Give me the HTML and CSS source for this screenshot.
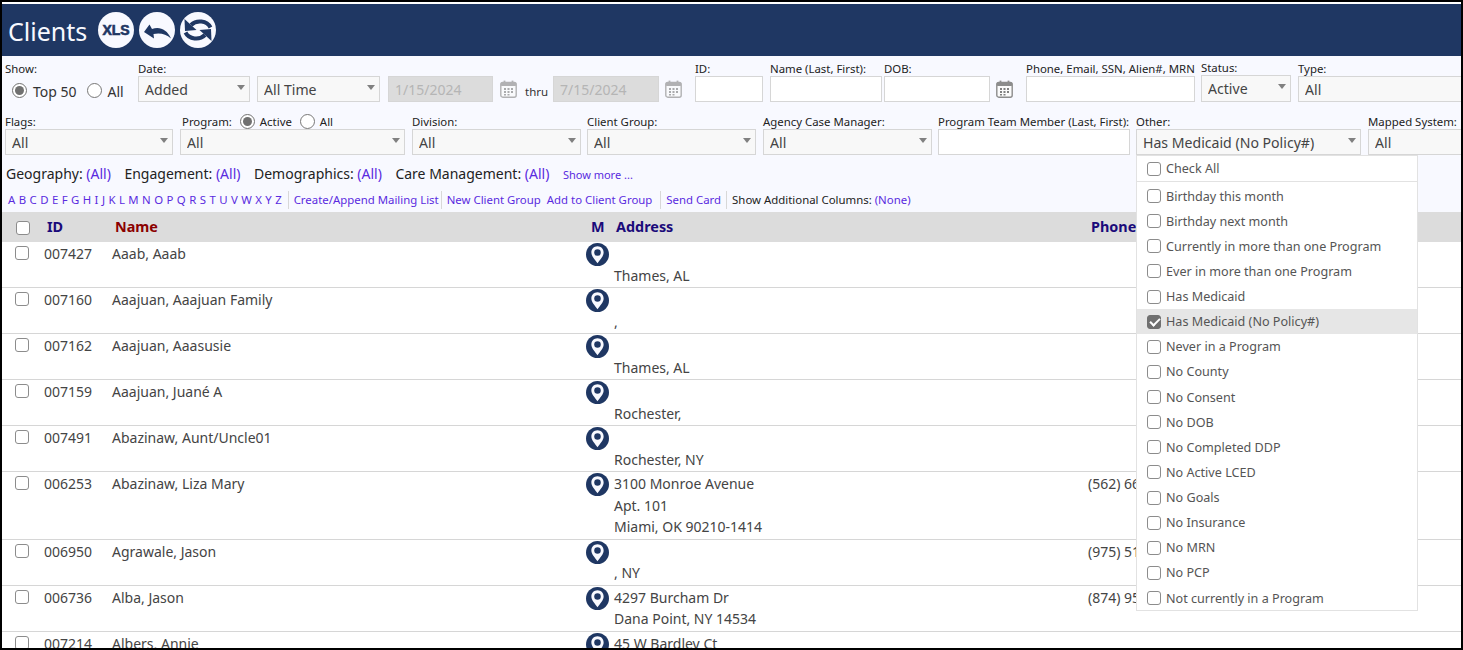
FILE: index.html
```html
<!DOCTYPE html>
<html lang="en">
<head>
    <meta charset="UTF-8">
    <title>Clients</title>
    <link rel="stylesheet" href="styles.css">
</head>
<body>
<svg class="defs" width="0" height="0">
    <symbol id="pin" viewBox="0 0 24 24">
        <circle cx="12" cy="12" r="12" fill="#1f3763"/>
        <path d="M12 3.500C8.200 3.500 5.600 6.400 5.600 9.900c0 3.900 3.900 7.700 6.400 11.100 2.500-3.400 6.400-7.200 6.400-11.100 0-3.500-2.600-6.400-6.400-6.400z" fill="#f8f9ff"/>
        <circle cx="12" cy="10" r="3.400" fill="#1f3763"/>
    </symbol>
    <symbol id="cal" viewBox="0 0 17 18">
        <rect x="0.800" y="2.500" width="15.400" height="14.700" rx="2" fill="#fbfbfb" stroke="#8c8c8c" stroke-width="1.400"/>
        <rect x="0.800" y="2.500" width="15.400" height="3.500" rx="1" fill="#8c8c8c"/>
        <rect x="3.600" y="0.600" width="1.800" height="3.400" fill="#8c8c8c"/>
        <rect x="11.600" y="0.600" width="1.800" height="3.400" fill="#8c8c8c"/>
        <path d="M4 8h2v2H4zM7.500 8h2v2h-2zM11 8h2v2h-2zM4 11h2v2H4zM7.500 11h2v2h-2zM11 11h2v2h-2zM7.500 14h2v1.600h-2zM4 14h2v1.600H4z" fill="#808080"/>
    </symbol>
</svg>

<div class="page">
    <div class="header">
        <h1>Clients</h1>
        <span class="round-btn xls">XLS</span>
        <span class="round-btn">
            <svg viewBox="0 0 36 36" width="36" height="36"><path d="M5 20 10.500 12.500 13 17C20 14 28 17 32 26.500 27 22 21 20.500 14.500 22L15 26.500z" fill="#1f3763"/></svg>
        </span>
        <span class="round-btn">
            <svg viewBox="0 0 36 36" width="36" height="36">
                <path d="M30.500 15.500C27 8.500 16.500 7.500 11 13" fill="none" stroke="#1f3763" stroke-width="4"/>
                <path d="M4.500 7 5 19 16.500 18z" fill="#1f3763"/>
                <path d="M5.500 20.500C9 27.500 19.500 28.500 25 23" fill="none" stroke="#1f3763" stroke-width="4"/>
                <path d="M31.500 29 31 17 19.500 18z" fill="#1f3763"/>
            </svg>
        </span>
    </div>

    <div class="filters">
        <div class="filter-row row-one">
            <div class="field f-show">
                <label>Show:</label>
                <div class="radios">
                    <input type="radio" name="show" checked><span class="radio-text">Top 50</span>
                    <input type="radio" name="show"><span class="radio-text">All</span>
                </div>
            </div>
            <div class="field f-added"><label>Date:</label><div class="select"><select><option>Added</option></select></div></div>
            <div class="field f-time"><div class="select"><select><option>All Time</option></select></div></div>
            <div class="field f-date"><input class="text-input" type="text" value="1/15/2024" disabled></div>
            <svg class="cal-icon f-cal1"><use href="#cal"/></svg>
            <span class="thru">thru</span>
            <div class="field f-date2"><input class="text-input" type="text" value="7/15/2024" disabled></div>
            <svg class="cal-icon f-cal2"><use href="#cal"/></svg>
            <div class="field f-id"><label>ID:</label><input class="text-input" type="text"></div>
            <div class="field f-name"><label>Name (Last, First):</label><input class="text-input" type="text"></div>
            <div class="field f-dob"><label>DOB:</label><input class="text-input" type="text"></div>
            <svg class="cal-icon f-cal3"><use href="#cal"/></svg>
            <div class="field f-phone"><label>Phone, Email, SSN, Alien#, MRN</label><input class="text-input" type="text"></div>
            <div class="field f-status"><label>Status:</label><div class="select tall"><select><option>Active</option></select></div></div>
            <div class="field f-type"><label>Type:</label><div class="select"><select><option>All</option></select></div></div>
        </div>

        <div class="filter-row row-two">
            <div class="field f-flags"><label>Flags:</label><div class="select"><select><option>All</option></select></div></div>
            <div class="field f-program">
                <div class="program-label">
                    <label>Program:</label>
                    <input type="radio" name="prog" checked><span>Active</span>
                    <input type="radio" name="prog"><span>All</span>
                </div>
                <div class="select"><select><option>All</option></select></div>
            </div>
            <div class="field f-division"><label>Division:</label><div class="select"><select><option>All</option></select></div></div>
            <div class="field f-group"><label>Client Group:</label><div class="select"><select><option>All</option></select></div></div>
            <div class="field f-acm"><label>Agency Case Manager:</label><div class="select"><select><option>All</option></select></div></div>
            <div class="field f-team"><label>Program Team Member (Last, First):</label><input class="text-input" type="text"></div>
            <div class="field f-other"><label>Other:</label><div class="select"><select><option>Has Medicaid (No Policy#)</option></select></div></div>
            <div class="field f-mapped"><label>Mapped System:</label><div class="select"><select><option>All</option></select></div></div>
        </div>

        <div class="summary">
            <span>Geography: <a>(All)</a></span>
            <span>Engagement: <a>(All)</a></span>
            <span>Demographics: <a>(All)</a></span>
            <span>Care Management: <a>(All)</a></span>
            <a class="show-more">Show more ...</a>
        </div>

        <div class="links">
            <span class="letters"><a>A</a> <a>B</a> <a>C</a> <a>D</a> <a>E</a> <a>F</a> <a>G</a> <a>H</a> <a>I</a> <a>J</a> <a>K</a> <a>L</a> <a>M</a> <a>N</a> <a>O</a> <a>P</a> <a>Q</a> <a>R</a> <a>S</a> <a>T</a> <a>U</a> <a>V</a> <a>W</a> <a>X</a> <a>Y</a> <a>Z</a></span>
            <span class="sep mailing"><a>Create/Append Mailing List</a></span>
            <span class="sep group-links"><a>New Client Group</a><a class="next">Add to Client Group</a></span>
            <span class="sep"><a>Send Card</a></span>
            <span class="sep dark">Show Additional Columns: <a>(None)</a></span>
        </div>
    </div>

    <table class="clients">
        <colgroup>
            <col class="c-check"><col class="c-id"><col class="c-name"><col class="c-map"><col class="c-addr"><col>
        </colgroup>
        <thead>
            <tr>
                <th><input class="cb" type="checkbox"></th>
                <th>ID</th>
                <th class="sorted">Name</th>
                <th>M</th>
                <th>Address</th>
                <th>Phone</th>
            </tr>
        </thead>
        <tbody>
            <tr>
                <td><input class="cb" type="checkbox"></td><td>007427</td><td>Aaab, Aaab</td>
                <td><svg class="pin"><use href="#pin"/></svg></td><td><br>Thames, AL</td><td></td>
            </tr>
            <tr>
                <td><input class="cb" type="checkbox"></td><td>007160</td><td>Aaajuan, Aaajuan Family</td>
                <td><svg class="pin"><use href="#pin"/></svg></td><td><br>,</td><td></td>
            </tr>
            <tr>
                <td><input class="cb" type="checkbox"></td><td>007162</td><td>Aaajuan, Aaasusie</td>
                <td><svg class="pin"><use href="#pin"/></svg></td><td><br>Thames, AL</td><td></td>
            </tr>
            <tr>
                <td><input class="cb" type="checkbox"></td><td>007159</td><td>Aaajuan, Juané A</td>
                <td><svg class="pin"><use href="#pin"/></svg></td><td><br>Rochester,</td><td></td>
            </tr>
            <tr>
                <td><input class="cb" type="checkbox"></td><td>007491</td><td>Abazinaw, Aunt/Uncle01</td>
                <td><svg class="pin"><use href="#pin"/></svg></td><td><br>Rochester, NY</td><td></td>
            </tr>
            <tr>
                <td><input class="cb" type="checkbox"></td><td>006253</td><td>Abazinaw, Liza Mary</td>
                <td><svg class="pin"><use href="#pin"/></svg></td><td>3100 Monroe Avenue<br>Apt. 101<br>Miami, OK 90210-1414</td><td>(562) 66</td>
            </tr>
            <tr>
                <td><input class="cb" type="checkbox"></td><td>006950</td><td>Agrawale, Jason</td>
                <td><svg class="pin"><use href="#pin"/></svg></td><td><br>, NY</td><td>(975) 51</td>
            </tr>
            <tr>
                <td><input class="cb" type="checkbox"></td><td>006736</td><td>Alba, Jason</td>
                <td><svg class="pin"><use href="#pin"/></svg></td><td>4297 Burcham Dr<br>Dana Point, NY 14534</td><td>(874) 95</td>
            </tr>
            <tr>
                <td><input class="cb" type="checkbox"></td><td>007214</td><td>Albers, Annie</td>
                <td><svg class="pin"><use href="#pin"/></svg></td><td>45 W Bardley Ct</td><td></td>
            </tr>
        </tbody>
    </table>

    <div class="dropdown">
        <div class="check-all"><input class="cb" type="checkbox"><span>Check All</span></div>
        <ul class="options">
            <li><input class="cb" type="checkbox"><span>Birthday this month</span></li>
            <li><input class="cb" type="checkbox"><span>Birthday next month</span></li>
            <li><input class="cb" type="checkbox"><span>Currently in more than one Program</span></li>
            <li><input class="cb" type="checkbox"><span>Ever in more than one Program</span></li>
            <li><input class="cb" type="checkbox"><span>Has Medicaid</span></li>
            <li class="selected"><input class="cb" type="checkbox" checked><span>Has Medicaid (No Policy#)</span></li>
            <li><input class="cb" type="checkbox"><span>Never in a Program</span></li>
            <li><input class="cb" type="checkbox"><span>No County</span></li>
            <li><input class="cb" type="checkbox"><span>No Consent</span></li>
            <li><input class="cb" type="checkbox"><span>No DOB</span></li>
            <li><input class="cb" type="checkbox"><span>No Completed DDP</span></li>
            <li><input class="cb" type="checkbox"><span>No Active LCED</span></li>
            <li><input class="cb" type="checkbox"><span>No Goals</span></li>
            <li><input class="cb" type="checkbox"><span>No Insurance</span></li>
            <li><input class="cb" type="checkbox"><span>No MRN</span></li>
            <li><input class="cb" type="checkbox"><span>No PCP</span></li>
            <li><input class="cb" type="checkbox"><span>Not currently in a Program</span></li>
        </ul>
    </div>
</div>
</body>
</html>
```

FILE: styles.css
```css
:root {
    --navy: #1f3763;
    --link: #5a2be0;
    --border: #d6d6d6;
}
* {
    box-sizing: border-box;
}
html, body {
    margin: 0;
    height: 100%;
    overflow: hidden;
}
body {
    font-family: "Noto Sans", "Open Sans", sans-serif;
    font-size: 14px;
    color: #444;
    background: white;
}
.defs {
    position: absolute;
}
a {
    color: var(--link);
}
.page {
    position: relative;
    height: 650px;
    border: 2px solid black;
    overflow: hidden;
    background: white;
}

/* title bar */
.header {
    display: flex;
    align-items: center;
    height: 52px;
    margin-top: 2px;
    padding-left: 6px;
    background: var(--navy);
}
.header h1 {
    margin: 2px 10px 0 0;
    width: 80px;
    font-size: 25px;
    font-weight: normal;
    color: #f8f9ff;
    white-space: nowrap;
}
.round-btn {
    display: flex;
    align-items: center;
    justify-content: center;
    width: 36px;
    height: 36px;
    margin-right: 5px;
    border-radius: 50%;
    background: #f8f9ff;
}
.xls {
    font-family: "Liberation Sans", sans-serif;
    font-size: 14px;
    font-weight: bold;
    color: var(--navy);
    -webkit-text-stroke: 0.6px var(--navy);
}

/* filters */
.filters {
    padding-left: 3px;
    background: #f8f9ff;
    height: 156px;
    overflow: hidden;
}
.filter-row {
    display: flex;
    align-items: flex-end;
    width: 1600px;
}
.row-one {
    height: 41px;
    margin-top: 5px;
}
.row-two {
    height: 42px;
    margin-top: 11px;
}
.field {
    flex: none;
    display: flex;
    flex-direction: column;
}
.field label {
    font-size: 11.4px;
    line-height: 15px;
    color: #222;
    white-space: nowrap;
}
.select {
    position: relative;
    height: 26px;
}
.select.tall {
    height: 27px;
}
.select select {
    width: 100%;
    height: 100%;
    padding: 0 18px 0 6px;
    border: 1px solid var(--border);
    border-radius: 0;
    background: #f8f8f8;
    font: inherit;
    font-size: 14.1px;
    color: #444;
    appearance: none;
}
.select::after {
    content: "";
    position: absolute;
    right: 5px;
    top: 9px;
    border-left: 4.5px solid transparent;
    border-right: 4.5px solid transparent;
    border-top: 5px solid #808080;
}
.text-input {
    width: 100%;
    height: 26px;
    padding: 0 6px;
    border: 1px solid var(--border);
    border-radius: 0;
    background: white;
    font: inherit;
    font-size: 14px;
}
.text-input:disabled {
    background: #dcdcdc;
    color: #b5b5b5;
}
.radios {
    display: flex;
    align-items: center;
    height: 26px;
    padding-top: 3px;
}
input[type="radio"] {
    flex: none;
    width: 15px;
    height: 15px;
    margin: 0;
    accent-color: #707070;
}
.radios input:first-child {
    margin-left: 7px;
}
.radio-text {
    margin: 2px 10px 0 6px;
    font-size: 14px;
    color: #333;
}
.cal-icon {
    flex: none;
    width: 17px;
    height: 18px;
    margin-bottom: 4px;
}
.f-cal1, .f-cal2 {
    opacity: 0.65;
}
.thru {
    flex: none;
    width: 28px;
    margin-left: 8px;
    margin-bottom: 3px;
    font-size: 11.5px;
    color: #333;
}
.f-show { width: 133px; }
.f-added { width: 112px; }
.f-time { width: 123px; margin-left: 7px; }
.f-date { width: 105px; margin-left: 8px; }
.f-cal1 { margin-left: 7px; }
.f-date2 { width: 106px; }
.f-cal2 { margin-left: 6px; }
.f-id { width: 68px; margin-left: 13px; }
.f-name { width: 112px; margin-left: 7px; }
.f-dob { width: 106px; margin-left: 2px; }
.f-cal3 { margin-left: 6px; }
.f-phone { width: 169px; margin-left: 13px; }
.f-status { width: 90px; margin-left: 6px; }
.f-type { width: 200px; margin-left: 7px; }

.f-flags { width: 168px; }
.f-program { width: 225px; margin-left: 7px; }
.f-division { width: 169px; margin-left: 7px; }
.f-group { width: 169px; margin-left: 6px; }
.f-acm { width: 169px; margin-left: 7px; }
.f-team { width: 192px; margin-left: 6px; }
.f-other { width: 225px; margin-left: 6px; }
.f-mapped { width: 200px; margin-left: 7px; }

.program-label {
    display: flex;
    align-items: center;
    height: 15px;
    padding-left: 2px;
    font-size: 11.4px;
    color: #222;
}
.program-label input {
    margin: 0 5px 0 8px;
}

.summary {
    display: flex;
    align-items: baseline;
    gap: 13.5px;
    height: 20px;
    margin-top: 9px;
    padding-left: 1px;
    font-size: 14px;
    line-height: 20px;
    color: #222;
    white-space: nowrap;
}
.show-more {
    font-size: 11px;
}
.links {
    display: flex;
    align-items: stretch;
    height: 18px;
    margin-top: 7px;
    padding-left: 3px;
    font-size: 11.4px;
    line-height: 18px;
    white-space: nowrap;
}
.letters {
    word-spacing: 0.45px;
    padding-right: 6px;
}
.sep {
    padding: 0 5px 0 5px;
    border-left: 1px solid #d8d8d8;
}
.sep.mailing {
    padding-right: 2px;
}
.sep.group-links {
    padding-right: 8px;
}
.next {
    margin-left: 6px;
}
.dark {
    color: #222;
}

/* client table */
.clients {
    width: 100%;
    border-collapse: collapse;
    table-layout: fixed;
    line-height: 21.5px;
}
.c-check { width: 39px; }
.c-id { width: 68px; }
.c-name { width: 474px; }
.c-map { width: 28px; }
.c-addr { width: 474px; }
.clients th {
    height: 30px;
    padding: 0 0 0 6px;
    background: #dcdcdc;
    font-size: 14.4px;
    font-weight: bold;
    text-align: left;
    color: #1a0a7a;
}
.clients th.sorted {
    color: #8b0000;
}
.clients th:first-child {
    padding-left: 14px;
}
.clients th:nth-child(4) {
    padding-left: 8px;
}
.clients th:nth-child(5) {
    padding-left: 5px;
}
.clients td {
    padding: 1px 0 1px 3px;
    border-bottom: 1px solid var(--border);
    vertical-align: top;
    white-space: nowrap;
}
.clients td:first-child {
    padding-left: 13px;
}
.clients td .cb {
    display: block;
    margin-top: 3px;
}
.cb {
    appearance: none;
    display: inline-block;
    position: relative;
    width: 14px;
    height: 14px;
    margin: 0;
    border: 1.5px solid #8c8c8c;
    border-radius: 3px;
    background: white;
    vertical-align: middle;
}
.cb:checked {
    background: #707070;
    border-color: #707070;
}
.cb:checked::after {
    content: "";
    position: absolute;
    left: 3.5px;
    top: 0.5px;
    width: 4px;
    height: 8px;
    border: solid white;
    border-width: 0 2px 2px 0;
    transform: rotate(45deg);
}
.pin {
    display: block;
    width: 23px;
    height: 23px;
}

/* Other: multi-select popup */
.dropdown {
    position: absolute;
    left: 1134px;
    top: 153px;
    width: 282px;
    height: 456px;
    border: 1px solid #e2e2e2;
    background: white;
    color: #555;
    font-size: 12.6px;
}
.check-all {
    display: flex;
    align-items: center;
    gap: 5px;
    height: 26px;
    padding-left: 10px;
    border-bottom: 1px solid #e2e2e2;
}
.options {
    margin: 0;
    padding: 1.5px 0 0;
    list-style: none;
}
.options li {
    display: flex;
    align-items: center;
    gap: 5px;
    height: 25.125px;
    padding-left: 10px;
    white-space: nowrap;
}
.options li.selected {
    background: #e6e6e6;
}
```
